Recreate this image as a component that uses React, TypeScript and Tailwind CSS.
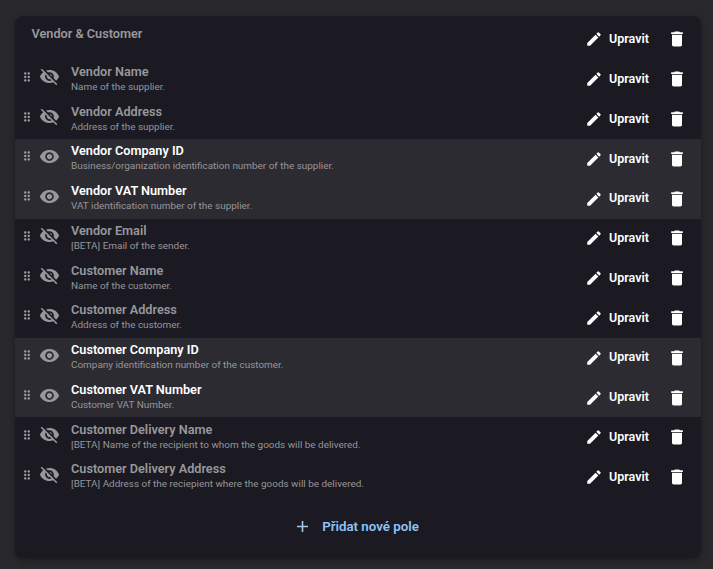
import React from "react";
import { MdAdd, MdDelete, MdDragIndicator, MdEdit, MdVisibility, MdVisibilityOff } from "react-icons/md";

interface Field {
  name: string;
  description: string;
  visible?: boolean;
}

const fields: Field[] = [
  { name: "Vendor Name", description: "Name of the supplier." },
  { name: "Vendor Address", description: "Address of the supplier." },
  { name: "Vendor Company ID", description: "Business/organization identification number of the supplier.", visible: true },
  { name: "Vendor VAT Number", description: "VAT identification number of the supplier.", visible: true },
  { name: "Vendor Email", description: "[BETA] Email of the sender." },
  { name: "Customer Name", description: "Name of the customer." },
  { name: "Customer Address", description: "Address of the customer." },
  { name: "Customer Company ID", description: "Company identification number of the customer.", visible: true },
  { name: "Customer VAT Number", description: "Customer VAT Number.", visible: true },
  { name: "Customer Delivery Name", description: "[BETA] Name of the recipient to whom the goods will be delivered." },
  { name: "Customer Delivery Address", description: "[BETA] Address of the reciepient where the goods will be delivered." },
];

const Actions = () => (
  <div className="flex items-center text-white">
    <MdEdit className="w-[18px] h-[18px]" />
    <span className="ml-[6px] w-[41px] text-[12.5px] font-semibold leading-none">Upravit</span>
    <MdDelete className="ml-[17px] w-[20px] h-[20px]" />
  </div>
);

const FieldRow = ({ field }: { field: Field }) => (
  <div className={`flex items-center h-[39.77px] pl-[5px] pr-[14px] ${field.visible ? "bg-[#2c2b32]" : ""}`}>
    <MdDragIndicator className="mb-[5px] w-[14px] h-[14px] text-[#a0a0a4]" />
    {field.visible ? (
      <MdVisibility className="ml-[5px] mb-[5px] w-[21px] h-[21px] text-[#98989b]" />
    ) : (
      <MdVisibilityOff className="ml-[5px] mb-[5px] w-[21px] h-[21px] text-[#98989b]" />
    )}
    <div className="ml-[11px] flex-1 pb-[2px]">
      <div className={`text-[12.7px] leading-[17px] font-semibold ${field.visible ? "text-white" : "text-[#98989b]"}`}>
        {field.name}
      </div>
      <div className="text-[9.93px] leading-[14.2px] text-[#96969a]">{field.description}</div>
    </div>
    <Actions />
  </div>
);

export default function App() {
  return (
    <div className="w-[713px] h-[569px] bg-[#29282c] pt-[16px] pl-[15px] font-['Roboto',sans-serif]">
      <div className="w-[686px] h-[542px] rounded-[8px] bg-[#1b1a22] shadow-[0_2px_6px_rgba(0,0,0,0.35)]">
        <div className="flex items-start justify-between h-[43.5px] pl-[16.5px] pr-[14px]">
          <div className="pt-[10px] text-[12.7px] leading-[16px] font-semibold text-[#98989b]">Vendor & Customer</div>
          <div className="pt-[13px]">
            <Actions />
          </div>
        </div>
        {fields.map((field) => (
          <FieldRow key={field.name} field={field} />
        ))}
        <div className="flex items-center justify-center mt-[20px] mr-[4px] text-[#8fc4f5]">
          <MdAdd className="w-[19px] h-[19px] text-[#a8c8e8]" />
          <span className="ml-[10px] text-[13.3px] font-semibold leading-[20px]">Přidat nové pole</span>
        </div>
      </div>
    </div>
  );
}
